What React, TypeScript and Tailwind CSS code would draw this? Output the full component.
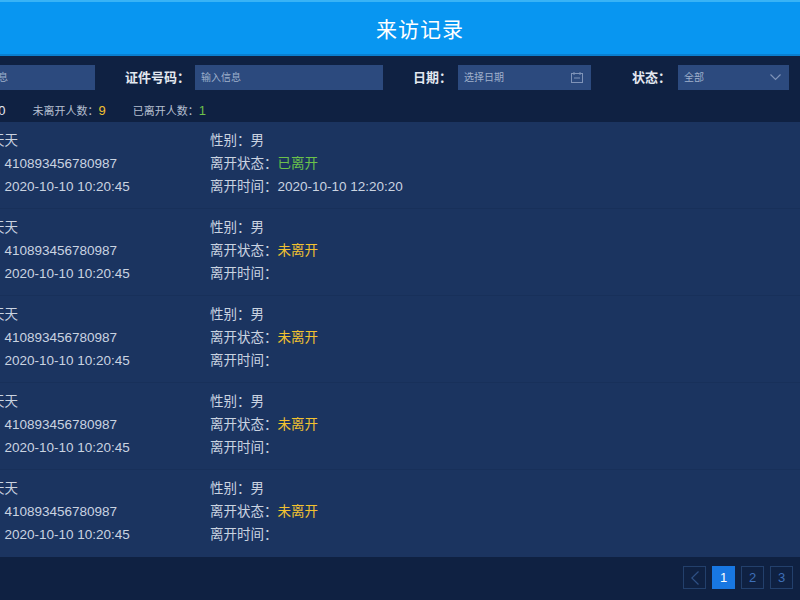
import React from "react";

type Visit = {
  id: number;
  name: string;
  idNo: string;
  inTime: string;
  gender: string;
  left: boolean;
  outTime: string;
};

const visits: Visit[] = [
  {id: 1, name: "李天天", idNo: "410893456780987", inTime: "2020-10-10 10:20:45", gender: "男", left: true, outTime: "2020-10-10 12:20:20"},
  {id: 2, name: "李天天", idNo: "410893456780987", inTime: "2020-10-10 10:20:45", gender: "男", left: false, outTime: ""},
  {id: 3, name: "李天天", idNo: "410893456780987", inTime: "2020-10-10 10:20:45", gender: "男", left: false, outTime: ""},
  {id: 4, name: "李天天", idNo: "410893456780987", inTime: "2020-10-10 10:20:45", gender: "男", left: false, outTime: ""},
  {id: 5, name: "李天天", idNo: "410893456780987", inTime: "2020-10-10 10:20:45", gender: "男", left: false, outTime: ""},
];

const CalendarIcon = () => (
  <svg width="12" height="11" viewBox="0 0 12 11" fill="none" stroke="#7f93b8" strokeWidth="1">
    <rect x="0.5" y="1.5" width="11" height="9" />
    <line x1="3" y1="0" x2="3" y2="3" />
    <line x1="9" y1="0" x2="9" y2="3" />
    <line x1="3" y1="6" x2="9" y2="6" />
  </svg>
);

const Chevron = () => (
  <svg width="11" height="7" viewBox="0 0 11 7" fill="none" stroke="#7f93b8" strokeWidth="1.2">
    <polyline points="0.5,0.5 5.5,5.5 10.5,0.5" />
  </svg>
);

const Field = ({label, value, valueClass}: {label: string; value: string; valueClass?: string}) => (
  <div className="h-[23px] leading-[23px] whitespace-nowrap">
    {label}
    <span className={valueClass}>{value}</span>
  </div>
);

export default function App() {
  return (
    <div className="w-[800px] h-[600px] overflow-hidden bg-[#0f2142] flex flex-col font-['Liberation_Sans','Noto_Sans_CJK_SC',sans-serif]">
      {/* header */}
      <header className="h-[56px] shrink-0 bg-[#0896f1] border-t-2 border-[#38b3f6] border-b-2 border-b-[#0a7fd0] flex items-center justify-center pl-[40px] pt-[3px]">
        <h1 className="text-[21px] text-white tracking-[1px]">来访记录</h1>
      </header>

      {/* filters */}
      <div className="flex items-center mt-[9px] h-[25px] text-[13px] font-bold text-[#e3e8f0] whitespace-nowrap">
        <div className="ml-[-38px] w-[133px] h-full bg-[#2c4a7e] text-[10px] font-normal text-[#9fb0cc] pl-[6px] flex items-center">输入信息</div>
        <span className="ml-[30px] w-[70px]">证件号码：</span>
        <div className="w-[188px] h-full bg-[#2c4a7e] text-[10px] font-normal text-[#9fb0cc] pl-[6px] flex items-center">输入信息</div>
        <span className="ml-[30px] w-[45px]">日期：</span>
        <div className="w-[133px] h-full bg-[#2c4a7e] text-[10px] font-normal text-[#9fb0cc] pl-[6px] pr-[8px] flex items-center justify-between">
          选择日期
          <CalendarIcon />
        </div>
        <span className="ml-[41px] w-[46px]">状态：</span>
        <div className="w-[111px] h-full bg-[#2c4a7e] text-[10px] font-normal text-[#9fb0cc] pl-[6px] pr-[8px] flex items-center justify-between">
          全部
          <Chevron />
        </div>
      </div>

      {/* stats */}
      <div className="flex items-center mt-[10px] h-[22px] text-[11px] text-[#b4bfd0] whitespace-nowrap gap-[27px]">
        <span className="ml-[-75px]">
          来访总人数：<span className="text-[13px] text-[#e3e8f0]">10</span>
        </span>
        <span>
          未离开人数：<span className="text-[13px] text-[#f2c230]">9</span>
        </span>
        <span>
          已离开人数：<span className="text-[13px] text-[#6cc24a]">1</span>
        </span>
      </div>

      {/* list */}
      <div className="bg-[#1b3460] text-[13.5px] text-[#cad3e0]">
        {visits.map((v) => (
          <div key={v.id} className="h-[87px] flex pt-[7px] border-b border-[#18305a] last:border-b-0">
            <div className="ml-[-63px] w-[273px]">
              <Field label="姓名：" value={v.name} />
              <Field label="证件号码：" value={v.idNo} />
              <Field label="来访时间：" value={v.inTime} />
            </div>
            <div>
              <Field label="性别：" value={v.gender} />
              <Field
                label="离开状态："
                value={v.left ? "已离开" : "未离开"}
                valueClass={v.left ? "text-[#6cc24a]" : "text-[#f2c230]"}
              />
              <Field label="离开时间：" value={v.outTime} />
            </div>
          </div>
        ))}
      </div>

      {/* pagination */}
      <div className="flex justify-end gap-[6px] mt-[9px] pr-[7px] text-[13px]">
        <div className="w-[23px] h-[23px] border border-[#23406c] flex items-center justify-center">
          <svg width="8" height="14" viewBox="0 0 8 14" fill="none" stroke="#2f5186" strokeWidth="1.2">
            <polyline points="7.5,0.5 0.8,7 7.5,13.5" />
          </svg>
        </div>
        <div className="w-[23px] h-[23px] bg-[#1877e2] text-white flex items-center justify-center">1</div>
        <div className="w-[23px] h-[23px] border border-[#23406c] text-[#3d6fb8] flex items-center justify-center">2</div>
        <div className="w-[23px] h-[23px] border border-[#23406c] text-[#3d6fb8] flex items-center justify-center">3</div>
      </div>
    </div>
  );
}
